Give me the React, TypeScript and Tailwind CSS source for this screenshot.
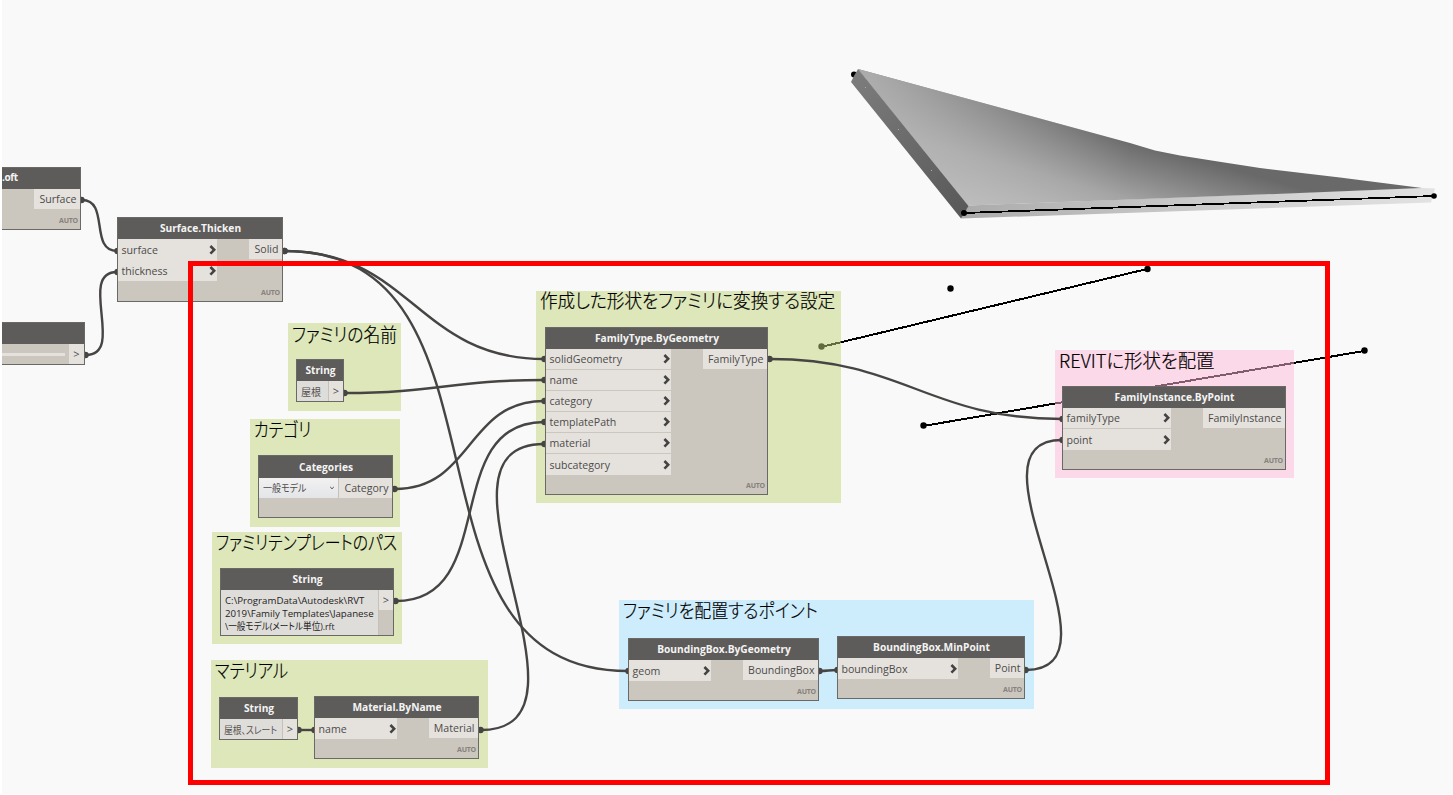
import type { ReactNode } from "react"
import { clsx } from "clsx"

type Point = [number, number]

type NodeProps = {
  title: string
  place: string
  headerClass?: string
  children?: ReactNode
}

type NoteProps = {
  title: string
  place: string
  color: string
  titleClass?: string
}

const WIRES: [Point, Point][] = [
  [[82, 200], [117, 251]],
  [[86, 355], [117, 272]],
  [[285, 251], [544, 359]],
  [[285, 251], [628, 671]],
  [[345, 393], [544, 380]],
  [[395, 489], [544, 401]],
  [[396, 601], [544, 422]],
  [[481, 730], [544, 444]],
  [[770, 359], [1062, 419]],
  [[820, 671], [837, 670]],
  [[1026, 670], [1062, 440]],
  [[299, 730], [314, 730]],
]

const GREEN = "bg-[#c1d67a]/50"
const BLUE = "bg-[#a4e1ff]/50"
const PINK = "bg-[#ffb8d8]/50"

// Horizontal handles grow with the distance between both ports
function wirePath([x0, y0]: Point, [x1, y1]: Point) {
  const offset = 0.45 * Math.hypot(x1 - x0, y1 - y0)
  return `M${x0} ${y0}C${x0 + offset} ${y0} ${x1 - offset} ${y1} ${x1} ${y1}`
}

function Chevron() {
  return (
    <svg className="mr-px h-[10px] w-[7px] shrink-0" viewBox="0 0 7 10" fill="none">
      <path d="M1.4 1 5.200 4.800 1.400 8.600" stroke="#454341" strokeWidth="2.600" />
    </svg>
  )
}

function Note({ title, place, color, titleClass }: NoteProps) {
  return (
    <div className={clsx("absolute pl-1", place, color)}>
      <h2
        className={clsx(
          "origin-left whitespace-nowrap font-['Noto_Sans_CJK_JP',sans-serif] text-[19px] leading-[20px] font-light text-black [-webkit-text-stroke:0.2px_#000] [font-feature-settings:'palt']",
          titleClass
        )}
      >
        {title}
      </h2>
    </div>
  )
}

function GraphNode({ title, place, headerClass = "h-[21px]", children }: NodeProps) {
  return (
    <section
      className={clsx(
        "absolute flex flex-col overflow-hidden border border-[#6b6966] bg-[#cbc6be] text-[#4d4b49]",
        place
      )}
    >
      <header
        className={clsx(
          "flex shrink-0 items-center justify-center bg-[#5e5c5a] pt-px pl-px text-[10.2px] font-bold whitespace-nowrap text-[#f4f4f4]",
          headerClass
        )}
      >
        {title}
      </header>
      {children}
    </section>
  )
}

function Ports({
  inputs,
  output,
  inputClass,
  split = true,
}: {
  inputs: string[]
  output: string
  inputClass: string
  split?: boolean
}) {
  return (
    <div className="flex items-start justify-between">
      <ul className={clsx("flex flex-col", inputClass)}>
        {inputs.map((name, i) => (
          <li
            key={name}
            className={clsx(
              "flex h-[21px] items-center justify-between bg-[#e5e2de] pl-[3.5px] text-[10.6px]",
              split && i < inputs.length - 1 && "border-b border-[#cbc6be]"
            )}
          >
            <span className="leading-[20px]">{name}</span>
            <Chevron />
          </li>
        ))}
      </ul>
      <Output>{output}</Output>
    </div>
  )
}

function Output({ children }: { children: ReactNode }) {
  return (
    <span className="h-[20px] bg-[#e5e2de] pr-[3.5px] pl-[5px] text-[10.6px] leading-[21px] whitespace-nowrap">
      {children}
    </span>
  )
}

function Auto() {
  return (
    <footer className="mt-auto pr-[2px] pb-[3px] text-right text-[7px] leading-[11px] font-bold tracking-[-0.2px] text-[#85817b]">
      AUTO
    </footer>
  )
}

function StringBody({ children, multiline }: { children: ReactNode; multiline?: boolean }) {
  return (
    <div className="flex flex-1">
      <div
        className={clsx(
          "w-0 flex-1 border-r border-[#c4c0ba] bg-[#dfddda] pl-1 whitespace-nowrap",
          multiline
            ? "text-[9.7px] leading-[13px] text-[#222]"
            : "flex items-center text-[10px] text-[#55534f]"
        )}
      >
        {children}
      </div>
      <span
        className={clsx(
          "flex w-[14px] items-center justify-center bg-[#e5e2de] text-[11px]",
          multiline ? "h-[20px]" : "h-full"
        )}
      >
        &gt;
      </span>
    </div>
  )
}

function Geometry() {
  return (
    <svg className="absolute inset-0" width="1453" height="795" viewBox="0 0 1453 795">
      <defs>
        <linearGradient id="top" gradientUnits="userSpaceOnUse" x1="1008" y1="214" x2="1036" y2="114">
          <stop offset="0" stopColor="#bebebe" />
          <stop offset="0.45" stopColor="#a3a3a3" />
          <stop offset="1" stopColor="#696969" />
        </linearGradient>
        <linearGradient id="sheen" gradientUnits="userSpaceOnUse" x1="870" y1="0" x2="1130" y2="0">
          <stop offset="0" stopColor="#bababa" stopOpacity="0.8" />
          <stop offset="1" stopColor="#bababa" stopOpacity="0" />
        </linearGradient>
        <linearGradient id="side" gradientUnits="userSpaceOnUse" x1="856" y1="76" x2="964" y2="212">
          <stop offset="0" stopColor="#7c7c7c" />
          <stop offset="1" stopColor="#595959" />
        </linearGradient>
        <linearGradient id="front" gradientUnits="userSpaceOnUse" x1="965" y1="0" x2="1434" y2="0">
          <stop offset="0" stopColor="#ababab" />
          <stop offset="0.45" stopColor="#c8c8c8" />
          <stop offset="1" stopColor="#e2e2e2" />
        </linearGradient>
      </defs>
      <circle cx="854" cy="74.500" r="3" />
      <path d="M968 205.500 1422 188 1435 188.500 1431 202.500 961 218.500z" fill="url(#front)" />
      <path
        d="M858 69 1130 143 1155 150.500 1180 155.500 1218 161.500 1260 168 1340 177.500 1422 188 1300 193 1130 199.500 968 205.500z"
        fill="url(#top)"
      />
      <path d="M858 69 1130 143 1155 150.500 1130 199.500 968 205.500z" fill="url(#sheen)" />
      <path d="M858 69 968.500 206 961 218.500 851 82 854 76z" fill="url(#side)" />
      <g fill="#aaa">
        <rect x="865" y="87" width="1" height="1" />
        <rect x="898" y="129" width="1" height="1" />
        <rect x="931" y="170" width="1" height="1" />
      </g>
      <g stroke="#000" strokeWidth="2" shapeRendering="crispEdges">
        <path d="M964 213 1434 196" strokeWidth="1.800" />
        <path d="M821 347 1147 269" />
        <path d="M923 426 1364 351" />
      </g>
      <circle cx="964" cy="213" r="3" />
      <circle cx="1434" cy="196" r="2.800" />
      <circle cx="1147.500" cy="269" r="3.200" />
      <circle cx="821.500" cy="346.500" r="3.200" />
      <circle cx="950.500" cy="288.500" r="3.200" />
      <circle cx="923.500" cy="425.500" r="3.200" />
      <circle cx="1364.500" cy="350.500" r="3.200" />
    </svg>
  )
}

function Wires() {
  return (
    <svg className="absolute inset-0" width="1453" height="795" viewBox="0 0 1453 795">
      {WIRES.map(([from, to]) => (
        <g key={`${from}-${to}`}>
          <path d={wirePath(from, to)} fill="none" stroke="#474543" strokeWidth="2.400" />
          <circle cx={from[0] - 0.5} cy={from[1]} r="3.200" fill="#474543" />
          <circle cx={to[0] + 0.5} cy={to[1]} r="3.200" fill="#474543" />
        </g>
      ))}
    </svg>
  )
}

export default function App() {
  return (
    <main className="h-[795px] w-[1453px] bg-white pl-[2px] font-['Open_Sans',sans-serif]">
      <div className="h-[794px] bg-[#f9f9f9]" />
      <div className="absolute top-0 left-0 h-[795px] w-[1453px] overflow-hidden">
        <Geometry />

        <Note title="ファミリの名前" color={GREEN} place="left-[288px] top-[323px] w-[113px] h-[88px]" titleClass="pt-px scale-x-[0.885]" />
        <Note title="カテゴリ" color={GREEN} place="left-[250px] top-[419px] w-[150px] h-[108px]" titleClass="scale-x-[0.84]" />
        <Note title="ファミリテンプレートのパス" color={GREEN} place="left-[212px] top-[532px] w-[190px] h-[112px]" titleClass="scale-x-[0.835]" />
        <Note title="マテリアル" color={GREEN} place="left-[211px] top-[660px] w-[277px] h-[108px]" titleClass="scale-x-[0.86]" />
        <Note title="作成した形状をファミリに変換する設定" color={GREEN} place="left-[536px] top-[291px] w-[305px] h-[212px]" titleClass="-mt-px scale-x-[0.926]" />
        <Note title="ファミリを配置するポイント" color={BLUE} place="left-[619px] top-[600px] w-[415px] h-[109px]" titleClass="scale-x-[0.89]" />
        <Note title="REVITに形状を配置" color={PINK} place="left-[1055px] top-[350px] w-[239px] h-[128px]" titleClass="scale-x-[0.965]" />

        <Wires />

        <GraphNode title="" place="left-[2px] top-[167px] w-[79px] h-[63px] border-l-0">
          <span className="-mt-[20px] mb-[3px] h-[17px] text-[10px] leading-[17px] font-bold tracking-[-0.4px] text-[#f4f4f4]">.oft</span>
          <div className="flex justify-end">
            <Output>Surface</Output>
          </div>
          <Auto />
        </GraphNode>

        <GraphNode title="" place="left-[2px] top-[322px] w-[83px] h-[43px] border-l-0">
          <div className="flex flex-1 items-center justify-between">
            <div className="h-[3px] w-[63px] bg-[#e5e2de]" />
            <span className="flex h-full w-[15px] items-center justify-center bg-[#e5e2de] text-[11px]">&gt;</span>
          </div>
        </GraphNode>

        <GraphNode title="Surface.Thicken" place="left-[117px] top-[217px] w-[166px] h-[85px]">
          <Ports inputs={["surface", "thickness"]} output="Solid" inputClass="w-[99px]" split={false} />
          <Auto />
        </GraphNode>

        <GraphNode title="String" place="left-[296px] top-[359px] w-[48px] h-[43px]">
          <StringBody>
            <span className="font-['Noto_Sans_CJK_JP',sans-serif]">屋根</span>
          </StringBody>
        </GraphNode>

        <GraphNode title="Categories" place="left-[258px] top-[455px] w-[135px] h-[63px]" headerClass="h-[22px]">
          <div className="flex">
            <div className="flex h-[20px] flex-1 items-center justify-between border-r border-[#c4c0ba] bg-gradient-to-b from-[#f1f1f1] to-[#e4e5e8] pr-1 pl-1">
              <span className="origin-left scale-x-[0.9] pb-[2px] font-['Noto_Sans_CJK_JP',sans-serif] text-[10px] [font-feature-settings:'palt']">
                一般モデル
              </span>
              <svg className="h-[4px] w-[4px]" viewBox="0 0 4 4" fill="none">
                <path d="M0 .5 2 3 4 .5" stroke="#666" />
              </svg>
            </div>
            <Output>Category</Output>
          </div>
        </GraphNode>

        <GraphNode title="String" place="left-[220px] top-[568px] w-[174px] h-[68px]">
          <StringBody multiline>
            <p className="pt-[4px]">C:\ProgramData\Autodesk\RVT</p>
            <p>2019\Family Templates\Japanese</p>
            <p className="origin-left scale-x-[0.89] font-['Open_Sans','Noto_Sans_CJK_JP',sans-serif] [font-feature-settings:'palt']">
              \一般モデル(メートル単位).rft
            </p>
          </StringBody>
        </GraphNode>

        <GraphNode title="String" place="left-[219px] top-[697px] w-[79px] h-[43px]">
          <StringBody>
            <span className="origin-left scale-x-[0.88] font-['Noto_Sans_CJK_JP',sans-serif] [font-feature-settings:'palt']">
              屋根、スレート
            </span>
          </StringBody>
        </GraphNode>

        <GraphNode title="Material.ByName" place="left-[314px] top-[696px] w-[165px] h-[63px]">
          <Ports inputs={["name"]} output="Material" inputClass="w-[82px]" />
          <Auto />
        </GraphNode>

        <GraphNode title="FamilyType.ByGeometry" place="left-[545px] top-[327px] w-[223px] h-[168px]">
          <Ports
            inputs={["solidGeometry", "name", "category", "templatePath", "material", "subcategory"]}
            output="FamilyType"
            inputClass="w-[125px]"
          />
          <Auto />
        </GraphNode>

        <GraphNode title="BoundingBox.ByGeometry" place="left-[628px] top-[638px] w-[191px] h-[63px]">
          <Ports inputs={["geom"]} output="BoundingBox" inputClass="w-[82px]" />
          <Auto />
        </GraphNode>

        <GraphNode title="BoundingBox.MinPoint" place="left-[837px] top-[636px] w-[188px] h-[63px]">
          <Ports inputs={["boundingBox"]} output="Point" inputClass="w-[120px]" />
          <Auto />
        </GraphNode>

        <GraphNode title="FamilyInstance.ByPoint" place="left-[1062px] top-[386px] w-[224px] h-[84px]">
          <Ports inputs={["familyType", "point"]} output="FamilyInstance" inputClass="w-[108px]" />
          <Auto />
        </GraphNode>

        <div className="absolute top-[261px] left-[188px] h-[524px] w-[1142px] border-[5px] border-[#fe0000]" />
      </div>
    </main>
  )
}
